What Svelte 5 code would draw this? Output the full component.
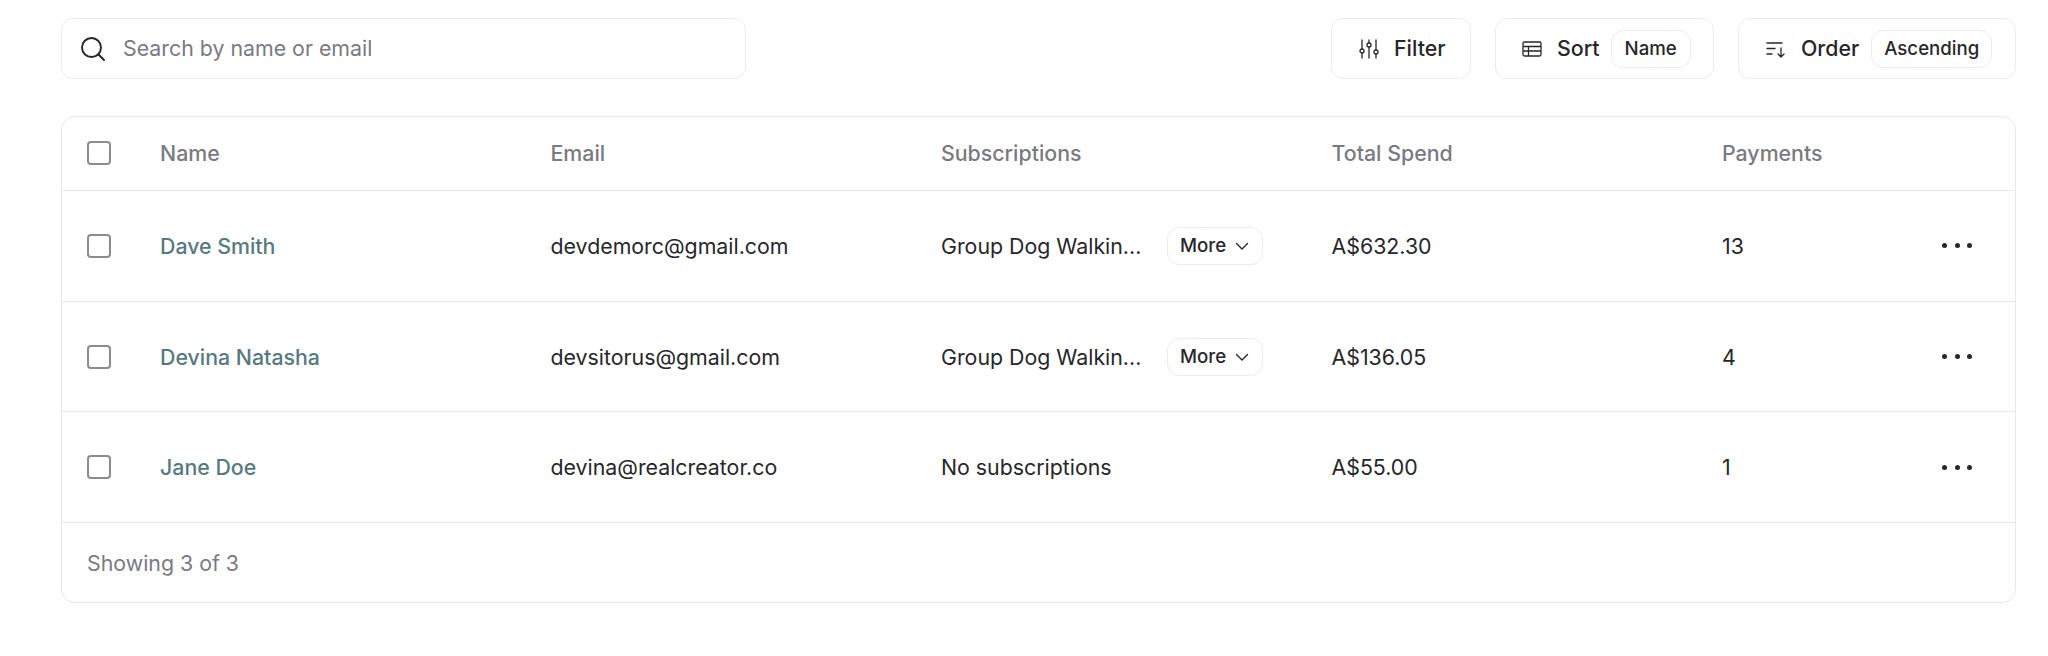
<script>
  const rows = [
    { name: 'Dave Smith', email: 'devdemorc@gmail.com', sub: 'Group Dog Walkin...', more: true, spend: 'A$632.30', pay: '13' },
    { name: 'Devina Natasha', email: 'devsitorus@gmail.com', sub: 'Group Dog Walkin...', more: true, spend: 'A$136.05', pay: '4' },
    { name: 'Jane Doe', email: 'devina@realcreator.co', sub: 'No subscriptions', more: false, spend: 'A$55.00', pay: '1' }
  ];
</script>

<div class="page">
  <div class="toolbar">
    <div class="search">
      <svg width="28" height="28" viewBox="0 0 28 28" fill="none" stroke="#27272a" stroke-width="1.9" stroke-linecap="round"><circle cx="12.500" cy="12.500" r="9.500"/><path d="M19.500 19.500 25 25"/></svg>
      <span class="placeholder">Search by name or email</span>
    </div>
    <div class="actions">
      <div class="btn filter">
        <svg width="22" height="22" viewBox="0 0 22 22" fill="none" stroke="#27272a" stroke-width="1.3" stroke-linecap="round"><path d="M4 2v9M4 15v5M11 2v3M11 9v11M18 2v10M18 16v4"/><circle cx="4" cy="13" r="2"/><circle cx="11" cy="7" r="2"/><circle cx="18" cy="14" r="2"/></svg>
        <span>Filter</span>
      </div>
      <div class="btn sort">
        <svg width="22" height="22" viewBox="0 0 22 22" fill="none" stroke="#27272a" stroke-width="1.3"><rect x="2" y="4" width="18" height="14" rx="1.5"/><path d="M2 8.500h18M2 13h18M7.500 8.500V18"/></svg>
        <span>Sort</span>
        <span class="chip">Name</span>
      </div>
      <div class="btn order">
        <svg width="22" height="22" viewBox="0 0 22 22" fill="none" stroke="#27272a" stroke-width="1.3" stroke-linecap="round" stroke-linejoin="round"><path d="M2 5h15M2 10.500h8M2 16h5M16 10v9M13 16l3 3 3-3"/></svg>
        <span>Order</span>
        <span class="chip">Ascending</span>
      </div>
    </div>
  </div>

  <div class="card">
    <div class="row head">
      <div class="check"></div>
      <div>Name</div>
      <div>Email</div>
      <div>Subscriptions</div>
      <div>Total Spend</div>
      <div>Payments</div>
      <div></div>
    </div>
    {#each rows as r}
      <div class="row body">
        <div class="check"></div>
        <div class="name">{r.name}</div>
        <div>{r.email}</div>
        <div class="sub">
          <span class="subname">{r.sub}</span>
          {#if r.more}
            <span class="more">More
              <svg width="16" height="16" viewBox="0 0 16 16" fill="none" stroke="#27272a" stroke-width="1.4" stroke-linecap="round" stroke-linejoin="round"><path d="M2.500 5.500 8 11l5.500-5.500"/></svg>
            </span>
          {/if}
        </div>
        <div>{r.spend}</div>
        <div>{r.pay}</div>
        <div class="dots"><i></i><i></i><i></i></div>
      </div>
    {/each}
    <div class="foot">Showing 3 of 3</div>
  </div>
</div>

<style>
  :global(body) { background: #fff; }
  .page {
    box-sizing: border-box;
    width: 2048px;
    height: 656px;
    padding: 18px 32px 0 61px;
    font-family: Inter, "Liberation Sans", sans-serif;
    color: #27272a;
    font-size: 21.33px;
  }
  .toolbar { display: flex; justify-content: space-between; height: 61px; margin-bottom: 37px; }
  .search {
    box-sizing: border-box;
    width: 685px;
    display: flex;
    align-items: center;
    gap: 16px;
    padding-left: 17px;
    border: 1px solid #ececee;
    border-radius: 12px;
  }
  .placeholder { color: #7a7a82; padding-bottom: 2px; }
  .actions { display: flex; gap: 24px; }
  .btn {
    box-sizing: border-box;
    display: flex;
    align-items: center;
    border: 1px solid #ececee;
    border-radius: 12px;
    font-weight: 500;
    padding-left: 26px;
  }
  .btn > span:not(.chip) { padding-bottom: 2px; }
  .btn svg { margin-right: 14px; flex: none; }
  .filter { width: 140px; }
  .sort { width: 219px; padding-left: 25px; }
  .sort .chip { margin-left: 11px; padding: 0 13px; }
  .order { width: 278px; }
  .chip {
    box-sizing: border-box;
    height: 38px;
    display: flex;
    align-items: center;
    padding: 0 12px;
    margin-left: 12px;
    border: 1px solid #ececee;
    border-radius: 12px;
    font-size: 18.67px;
  }
  .card {
    border: 1px solid #e8e8ea;
    border-radius: 14px;
    box-sizing: border-box;
    height: 487px;
    overflow: hidden;
  }
  .row {
    box-sizing: border-box;
    display: grid;
    grid-template-columns: 98px 390.500px 390.500px 390.500px 390.500px 1fr 73px;
    align-items: center;
    border-bottom: 1px solid #e8e8ea;
  }
  .row > .check { margin-left: 25px; }
  .head { height: 74px; color: #7a7a82; font-weight: 500; padding-bottom: 2px; }
  .body { height: 110.700px; }
  .check {
    box-sizing: border-box;
    width: 24px;
    height: 24px;
    border: 2px solid #8c8c90;
    border-radius: 4px;
  }
  .name { color: #557b80; font-weight: 500; }
  .sub { display: flex; align-items: center; }
  .subname { width: 226px; flex: none; }
  .more {
    box-sizing: border-box;
    width: 96px;
    height: 38px;
    display: flex;
    align-items: center;
    gap: 8px;
    padding-left: 12px;
    border: 1px solid #ececee;
    border-radius: 12px;
    font-size: 18.67px;
    font-weight: 500;
  }
  .dots { display: flex; gap: 7.500px; }
  .dots i { width: 5px; height: 5px; border-radius: 50%; background: #27272a; }
  .foot { padding: 27px 25px; color: #7a7a82; }
</style>
